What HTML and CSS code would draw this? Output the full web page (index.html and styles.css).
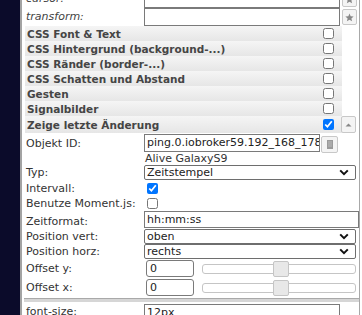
FILE: index.html
```html
<!DOCTYPE html>
<html lang="de">
<head>
<meta charset="utf-8">
<title>Widget Attribute</title>
<link rel="stylesheet" href="styles.css">
</head>
<body>
<div class="app">
  <div class="side"></div>
  <div class="panel">
    <div class="inner">
      <div class="row r-cursor">
        <div class="lbl it">cursor:</div>
        <div class="inp wide"></div>
        <div class="btn"><svg width="9" height="9" viewBox="0 0 10 10"><path d="M5 0.5 6.3 3.6 9.6 3.8 7.1 6 7.9 9.3 5 7.5 2.1 9.3 2.9 6 0.4 3.8 3.7 3.6Z" fill="#888"/></svg></div>
      </div>
      <div class="row r-transform">
        <div class="lbl it">transform:</div>
        <div class="inp wide"></div>
        <div class="btn"><svg width="9" height="9" viewBox="0 0 10 10"><path d="M5 0.5 6.3 3.6 9.6 3.8 7.1 6 7.9 9.3 5 7.5 2.1 9.3 2.9 6 0.4 3.8 3.7 3.6Z" fill="#888"/></svg></div>
      </div>

      <div class="grp"><div class="hdr"><span>CSS Font &amp; Text</span><input type="checkbox"></div><div class="gside"></div></div>
      <div class="grp"><div class="hdr"><span>CSS Hintergrund (background-...)</span><input type="checkbox"></div><div class="gside"></div></div>
      <div class="grp"><div class="hdr"><span>CSS Ränder (border-...)</span><input type="checkbox"></div><div class="gside"></div></div>
      <div class="grp"><div class="hdr"><span>CSS Schatten und Abstand</span><input type="checkbox"></div><div class="gside"></div></div>
      <div class="grp"><div class="hdr"><span>Gesten</span><input type="checkbox"></div><div class="gside"></div></div>
      <div class="grp"><div class="hdr"><span>Signalbilder</span><input type="checkbox"></div><div class="gside"></div></div>
      <div class="grp last"><div class="hdr"><span>Zeige letzte Änderung</span><input type="checkbox" checked></div>
        <div class="gside"><div class="btn up"><svg width="7" height="4" viewBox="0 0 7 4"><path d="M0.5 3.5 3.5 0.5 6.5 3.5Z" fill="#888"/></svg></div></div>
      </div>

      <div class="row r-oid">
        <div class="lbl">Objekt ID:</div>
        <div class="inp oid"><span class="clip">ping.0.iobroker59.192_168_178_40</span></div>
        <div class="btn idbtn"><svg width="6" height="9" viewBox="0 0 6 9"><rect x="0" y="0" width="6" height="9" fill="#9a9a9a"/><path d="M1 2H5M1 4H5M1 6H5" stroke="#c4c4c4" stroke-width="0.8"/></svg></div>
      </div>
      <div class="row r-alive"><div class="lbl"></div><div class="note">Alive GalaxyS9</div></div>
      <div class="row r-typ">
        <div class="lbl">Typ:</div>
        <div class="sel"><span>Zeitstempel</span><svg class="chev" width="10" height="7" viewBox="0 0 10 7"><path d="M1.2 1.4 5 5.2 8.8 1.4" fill="none" stroke="#111" stroke-width="2"/></svg></div>
      </div>
      <div class="row r-int">
        <div class="lbl">Intervall:</div>
        <input type="checkbox" class="cb" checked>
      </div>
      <div class="row r-mom">
        <div class="lbl">Benutze Moment.js:</div>
        <input type="checkbox" class="cb">
      </div>
      <div class="row r-fmt">
        <div class="lbl">Zeitformat:</div>
        <div class="inp fmt">hh:mm:ss</div>
      </div>
      <div class="row r-pv">
        <div class="lbl">Position vert:</div>
        <div class="sel"><span>oben</span><svg class="chev" width="10" height="7" viewBox="0 0 10 7"><path d="M1.2 1.4 5 5.2 8.8 1.4" fill="none" stroke="#111" stroke-width="2"/></svg></div>
      </div>
      <div class="row r-ph">
        <div class="lbl">Position horz:</div>
        <div class="sel"><span>rechts</span><svg class="chev" width="10" height="7" viewBox="0 0 10 7"><path d="M1.2 1.4 5 5.2 8.8 1.4" fill="none" stroke="#111" stroke-width="2"/></svg></div>
      </div>
      <div class="row r-oy">
        <div class="lbl">Offset y:</div>
        <div class="num">0</div>
        <div class="slider"><div class="track"></div><div class="handle"></div></div>
      </div>
      <div class="row r-ox">
        <div class="lbl">Offset x:</div>
        <div class="num">0</div>
        <div class="slider"><div class="track"></div><div class="handle"></div></div>
      </div>
      <div class="sep"></div>
      <div class="row r-fs">
        <div class="lbl">font-size:</div>
        <div class="inp fs">12px</div>
      </div>
    </div>
  </div>
</div>
</body>
</html>
```

FILE: styles.css
```css
html, body {
  margin: 0;
  padding: 0;
  background: #fff;
}
body {
  font-family: "DejaVu Sans", Verdana, sans-serif;
  font-size: 11px;
  color: #333;
  height: 315px;
  overflow: hidden;
}
.app {
  display: flex;
  height: 315px;
}
.side {
  width: 20px;
  flex: none;
  background: #0b0b2a;
}
.panel {
  width: 340px;
  flex: none;
  box-sizing: border-box;
  border-left: 2px solid #a3a3a3;
  border-right: 1px solid #a8a8a8;
  overflow: hidden;
}
.inner {
  margin-top: -10px;
  padding-left: 2px;
}
.row {
  display: flex;
  align-items: center;
}
.lbl {
  width: 118px;
  padding-left: 2px;
  flex: none;
  white-space: nowrap;
}
.it {
  font-style: italic;
  color: #444;
}
.inp {
  box-sizing: border-box;
  border: 1px solid #7a7a7a;
  background: #fff;
  color: #222;
  padding-left: 2px;
  white-space: nowrap;
  overflow: hidden;
}
.btn {
  box-sizing: border-box;
  border: 1px solid #c8c8c8;
  background: #f4f4f4;
  border-radius: 2px;
  display: flex;
  align-items: center;
  justify-content: center;
  flex: none;
}

.r-cursor, .r-transform { height: 18px; align-items: flex-start; }
.r-cursor .lbl, .r-transform .lbl { line-height: 18px; }
.inp.wide { width: 196px; height: 18px; }
.r-cursor .btn, .r-transform .btn { width: 15px; height: 16px; margin-left: 2px; margin-top: 1px; }

.grp {
  display: flex;
  height: 15px;
}
.grp.last { height: 17px; }
.hdr {
  width: 319px;
  box-sizing: border-box;
  margin-left: 1px;
  padding-left: 2px;
  display: flex;
  align-items: center;
  justify-content: space-between;
  font-weight: bold;
  font-size: 10.5px;
  color: #454545;
  background: linear-gradient(#f5f5f5, #e6e6e6);
  white-space: nowrap;
}
.hdr input {
  width: 11px;
  height: 11px;
  margin: 0 8px 0 0;
}
.gside { width: 17px; display: flex; align-items: flex-start; }
.btn.up { width: 15px; height: 17px; margin-left: -1px; }

.r-oid { height: 20px; }
.inp.oid { width: 176px; height: 18px; line-height: 16px; }
.clip { display: block; overflow: hidden; }
.btn.idbtn { width: 17px; height: 17px; margin-left: 1px; margin-top: 3px; align-self: flex-start; }

.r-alive { height: 12px; }
.note { padding-left: 1px; line-height: 12px; }

.sel {
  box-sizing: border-box;
  width: 212px;
  border: 1px solid #6e6e6e;
  border-radius: 2px;
  background: #fff;
  color: #222;
  display: flex;
  align-items: center;
  justify-content: space-between;
  padding: 0 6px 0 2px;
  height: 15px;
}
.r-typ { height: 15px; }
.r-int { height: 16px; }
.r-mom { height: 15px; }
.cb {
  width: 11px;
  height: 11px;
  margin: 0 0 0 3px;
}
.r-fmt { height: 17px; align-items: flex-end; }
.inp.fmt { width: 215px; height: 17px; line-height: 15px; }
.r-pv { height: 16px; }
.r-ph { height: 15px; }
.r-oy { height: 19px; }
.r-ox { height: 19px; }
.num {
  box-sizing: border-box;
  width: 48px;
  height: 17px;
  margin-left: 2px;
  border: 1px solid #7a7a7a;
  border-radius: 3px;
  padding-left: 3px;
  line-height: 15px;
  color: #222;
}
.slider {
  position: relative;
  width: 154px;
  height: 16px;
  margin-left: 8px;
  display: flex;
  align-items: center;
}
.track {
  box-sizing: border-box;
  width: 154px;
  height: 10px;
  border: 1px solid #c5c5c5;
  border-radius: 3px;
  background: #fff;
}
.handle {
  position: absolute;
  left: 71px;
  top: 0;
  box-sizing: border-box;
  width: 16px;
  height: 16px;
  border: 1px solid #c5c5c5;
  border-radius: 2px;
  background: #e8e8e8;
}
.sep {
  height: 3px;
  margin-top: 1px;
  border-top: 1px solid #a9a9a9;
  background: #d6d6d6;
}
.r-fs { height: 18px; align-items: flex-start; }
.r-fs .lbl { line-height: 18px; padding-top: 1px; }
.inp.fs { width: 196px; height: 16px; margin-top: 2px; line-height: 16px; }
```
